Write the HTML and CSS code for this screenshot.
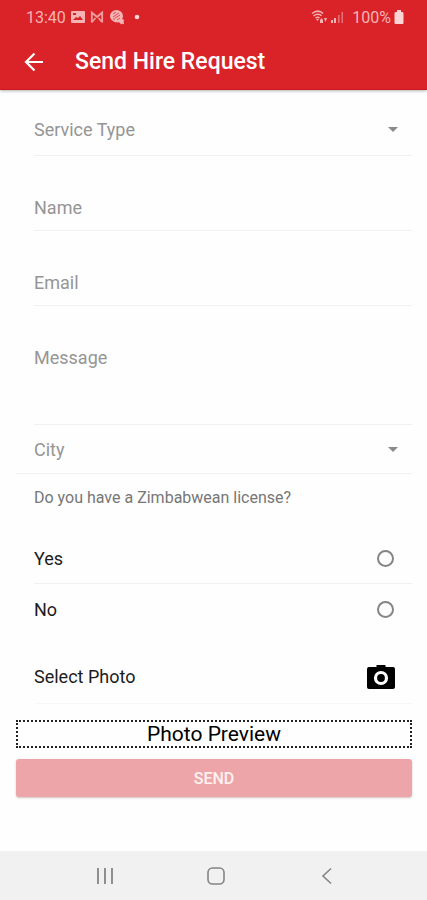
FILE: index.html
```html
<!DOCTYPE html>
<html lang="en">
<head>
<meta charset="utf-8">
<meta name="viewport" content="width=device-width, initial-scale=1">
<title>Send Hire Request</title>
<link rel="stylesheet" href="styles.css">
</head>
<body>
<header class="header">
  <div class="status">
    <span>13:40</span>
    <svg width="14" height="14" viewBox="0 0 14 14" aria-hidden="true"><path fill="currentColor" fill-rule="evenodd" d="M1 1h12a1 1 0 0 1 1 1v10a1 1 0 0 1-1 1H1a1 1 0 0 1-1-1V2a1 1 0 0 1 1-1zm1 9h10L9 6 7 8 5 7zM2 3v2h3V3z"/></svg>
    <svg class="mail" width="14" height="14" viewBox="0 0 14 14" aria-hidden="true"><path fill="none" stroke="currentColor" stroke-width="1.800" d="M1.800 12.500V2.500L7 7l5.200-4.500v10M2 12 5.500 8M12 12 8.500 8"/></svg>
    <svg width="16" height="16" viewBox="0 0 16 16" aria-hidden="true"><path fill="currentColor" d="M7.500 1a6.500 6 0 0 1 6.500 6c0 1-.3 2-.8 2.800l2.300 1.700-1 .6.600 3.200-2-.5-.6.800-2.500-2.300C5 14 1 11 1 7a6.500 6 0 0 1 6.500-6z"/><path fill="none" stroke="#d92329" stroke-width=".7" d="M4 5l3-2M4 8l6-4M6 9l5-3M8 11l3-2M4 10h2"/></svg>
    <svg width="14" height="14" viewBox="0 0 14 14" aria-hidden="true"><circle cx="7" cy="7" r="2.300" fill="#fbd5d5"/></svg>
    <span class="status-end">
      <svg width="17" height="14" viewBox="0 0 17 14" aria-hidden="true"><path fill="none" stroke="currentColor" stroke-width="1.500" d="M1 3.500c4-3 8-3 11 0M2.500 5.800c3-2 6-2 8 0M4.500 8c1.500-1 3-1 4 0"/><path fill="currentColor" d="M5 9h3l-1.500 2zM9 10l1.500-2 1.500 2v3H9zM13 8h3l-1.500 4z"/></svg>
      <svg width="14" height="14" viewBox="0 0 14 14" aria-hidden="true"><path fill="currentColor" d="M1 10h2v3H1zM4 8h2v5H4z"/><path fill="currentColor" opacity=".55" d="M8 5h1.500v8H8zM11.500 2H13v11h-1.500z"/></svg>
      <span class="percent">100%</span>
      <svg width="12" height="14" viewBox="0 0 12 14" aria-hidden="true"><path fill="#fbd5d5" d="M4 0h4v2h1.500l1 1v10l-.5 1H2l-.5-1V3l1-1H4z"/></svg>
    </span>
  </div>
  <div class="toolbar">
    <button class="back" type="button" aria-label="Back">
      <svg width="20" height="20" viewBox="0 0 20 20"><path fill="none" stroke="#fff" stroke-width="2.200" d="M19 10H2.500M10.500 1.500 2 10l8.500 8.500"/></svg>
    </button>
    <h1>Send Hire Request</h1>
  </div>
</header>

<main>
  <form class="form">
    <div class="field inset select">
      <select aria-label="Service Type"><option>Service Type</option></select>
    </div>
    <div class="field inset spaced"><input type="text" placeholder="Name" aria-label="Name"></div>
    <div class="field inset spaced"><input type="email" placeholder="Email" aria-label="Email"></div>
    <div class="field inset spaced"><textarea placeholder="Message" aria-label="Message"></textarea></div>
    <div class="field select">
      <select aria-label="City"><option>City</option></select>
    </div>
    <fieldset class="license">
      <legend>Do you have a Zimbabwean license?</legend>
      <label class="choice inset"><span>Yes</span><input type="radio" name="license" value="yes"></label>
      <label class="choice inset"><span>No</span><input type="radio" name="license" value="no"></label>
    </fieldset>
    <button class="photo inset" type="button">
      <span>Select Photo</span>
      <svg width="28" height="26" viewBox="0 0 28 26" aria-hidden="true"><path fill="#000" d="M9.500 1h9v2H26a2 2 0 0 1 2 2v18a2 2 0 0 1-2 2H2a2 2 0 0 1-2-2V5a2 2 0 0 1 2-2h7.500z"/><circle cx="14" cy="14" r="5.500" fill="none" stroke="#fff" stroke-width="3.200"/></svg>
    </button>
    <div class="preview">Photo Preview</div>
    <button class="send" type="submit" disabled>SEND</button>
  </form>
</main>

<nav class="nav" aria-label="System">
  <button type="button" aria-label="Recent apps"><svg width="18" height="18" viewBox="0 0 18 18"><path stroke="currentColor" stroke-width="1.800" d="M2 1v16M9 1v16M16 1v16"/></svg></button>
  <button type="button" aria-label="Home"><svg width="18" height="18" viewBox="0 0 18 18"><rect x="1" y="1" width="16" height="16" rx="4.500" fill="none" stroke="currentColor" stroke-width="1.600"/></svg></button>
  <button type="button" aria-label="Back"><svg width="18" height="18" viewBox="0 0 18 18"><path fill="none" stroke="currentColor" stroke-width="1.600" d="M13 1.500 5 9l8 7.500"/></svg></button>
</nav>
</body>
</html>
```
FILE: styles.css
```css
* {
  box-sizing: border-box;
}

body {
  margin: 0;
  min-height: 100vh;
  display: flex;
  flex-direction: column;
  background: #fefefe;
  color: #1c1c1c;
  font-family: Roboto, sans-serif;
  font-size: 18px;
}

button,
input,
select,
textarea {
  margin: 0;
  padding: 0;
  border: 0;
  border-radius: 0;
  outline: 0;
  background: none;
  color: inherit;
  font: inherit;
}

svg {
  display: block;
  flex: none;
}

.header {
  background: #d92329;
  color: #fff;
  border-bottom: 1px solid #c9181f;
  box-shadow: 0 1px 3px rgba(0, 0, 0, 0.3);
}

.status {
  display: flex;
  align-items: center;
  gap: 5px;
  height: 34px;
  padding: 0 22px 0 26px;
  color: #f5b3b4;
  font-size: 16px;
}

.status .mail {
  opacity: 0.85;
}

.status-end {
  display: flex;
  align-items: center;
  gap: 2px;
  margin-left: auto;
}

.percent {
  margin-left: 6px;
}

.toolbar {
  display: flex;
  align-items: center;
  gap: 31px;
  height: 55px;
  padding: 0 24px;
}

.toolbar h1 {
  margin: 0;
  font-size: 23px;
  font-weight: 500;
}

.form {
  display: flex;
  flex-direction: column;
  padding: 14px 15px 24px 16px;
}

.field {
  display: flex;
  height: 49px;
  padding-left: 18px;
  border-bottom: 1px solid #f1f1f1;
  color: #959595;
}

.inset {
  margin-left: 18px;
  padding-left: 0;
}

.field:first-child {
  height: 52px;
}

.spaced {
  height: 46px;
  margin-top: 29px;
}

.field:has(textarea) {
  height: 90px;
}

.field input,
.field select,
.field textarea {
  width: 100%;
  appearance: none;
  resize: none;
}

.field textarea {
  padding-top: 12px;
}

.field ::placeholder {
  color: inherit;
  opacity: 1;
}

.select {
  align-items: center;
  padding-right: 14px;
}

.select::after {
  content: "";
  border: 5px solid transparent;
  border-top-color: #8a8a8a;
  border-bottom: 0;
}

.license {
  margin: 0;
  padding: 0;
  border: 0;
}

.license legend {
  padding: 14px 18px 26px;
  color: #767676;
  font-size: 16px;
  line-height: 20px;
}

.choice {
  display: flex;
  align-items: center;
  justify-content: space-between;
  height: 50px;
  padding-right: 18px;
}

.choice:first-of-type {
  border-bottom: 1px solid #f1f1f1;
}

.choice input {
  width: 17px;
  height: 17px;
  appearance: none;
  border: 2px solid #858585;
  border-radius: 50%;
}

.choice input:checked {
  background: #d92329;
}

.photo {
  display: flex;
  align-items: center;
  justify-content: space-between;
  height: 54px;
  margin-top: 16px;
  padding-right: 17px;
  border-bottom: 1px solid #f7f7f7;
}

.preview {
  margin-top: 16px;
  border: 2px dotted #222;
  color: #000;
  font-size: 21px;
  line-height: 24px;
  text-align: center;
}

.send {
  height: 38px;
  margin-top: 11px;
  border-radius: 3px;
  background: #eda5a9;
  box-shadow: 0 1px 2px rgba(120, 60, 60, 0.3);
  color: #fff3f1;
  font-size: 16px;
  font-weight: 500;
}

.nav {
  display: flex;
  justify-content: center;
  gap: 93px;
  height: 49px;
  margin-top: auto;
  padding-left: 4px;
  background: #f1f1f1;
  color: #858585;
}
```
